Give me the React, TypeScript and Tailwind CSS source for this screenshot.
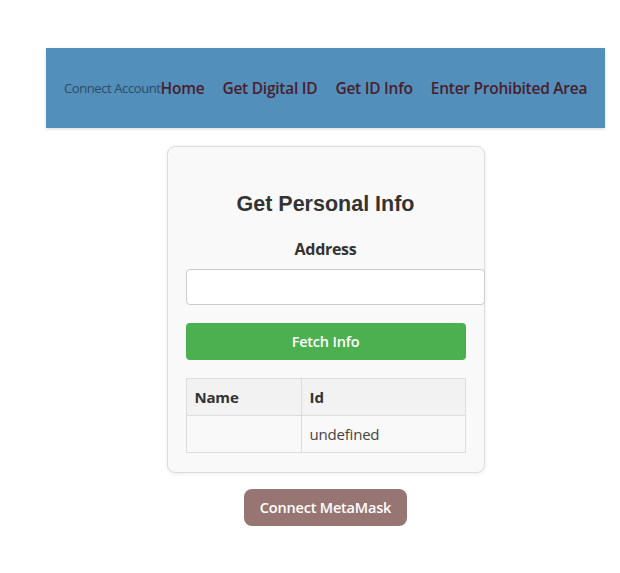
const font = { fontFamily: '"Open Sans", "Noto Sans", sans-serif' };

export default function App() {
  return (
    <div className="min-h-[573px] bg-white pl-[31px] pt-12" style={font}>
      <nav className="mx-[15px] flex h-20 items-center bg-[#528fba] pl-[18px] pt-px shadow-[0_1px_3px_rgba(0,0,0,0.15)]">
        <span className="text-[13px] tracking-[-0.4px] text-[#2e4a66]">Connect Account</span>
        <div className="flex items-center gap-[18px] text-[15.5px] font-semibold tracking-[-0.25px] text-[#4a1d2c]">
          <a>Home</a>
          <a>Get Digital ID</a>
          <a>Get ID Info</a>
          <a>Enter Prohibited Area</a>
        </div>
      </nav>

      <div className="mx-auto mt-[18px] w-[318px] rounded-lg border border-[#dcdcdc] bg-[#f9f9f9] px-[18px] pb-[19px] pt-[41px] shadow-[0_1px_4px_rgba(0,0,0,0.08)]">
        <h2
          className="text-center text-[21.5px] font-bold text-[#333]"
          style={{ fontFamily: '"Liberation Sans", Arial, sans-serif' }}
        >
          Get Personal Info
        </h2>
        <div className="mt-[17px] text-center text-[16px] font-bold tracking-[-0.3px] text-[#333]">Address</div>
        <input className="mt-[8px] block h-9 w-[299px] rounded border border-[#ccc] bg-white px-2 outline-none" />
        <button className="mt-[18px] block h-[37px] w-[280px] rounded bg-[#4caf50] text-[14.5px] font-semibold tracking-[-0.2px] text-white">
          Fetch Info
        </button>
        <table className="mt-[18px] w-[280px] border-collapse text-[15px] text-[#333]">
          <thead>
            <tr className="bg-[#f2f2f2]">
              <th className="h-[37px] w-[115px] border border-[#ddd] px-2 text-left font-bold tracking-[-0.2px]">Name</th>
              <th className="h-[37px] border border-[#ddd] px-2 text-left font-bold">Id</th>
            </tr>
          </thead>
          <tbody>
            <tr className="bg-[#f9f9f9]">
              <td className="h-[37px] border border-[#ddd] px-2"></td>
              <td className="h-[37px] border border-[#ddd] px-2 tracking-[-0.2px] text-[#444]">undefined</td>
            </tr>
          </tbody>
        </table>
      </div>

      <div className="mt-4 flex justify-center">
        <button className="h-[37px] w-[163px] rounded-lg bg-[#977572] text-[14.5px] font-semibold tracking-[-0.2px] text-white">
          Connect MetaMask
        </button>
      </div>
    </div>
  );
}
